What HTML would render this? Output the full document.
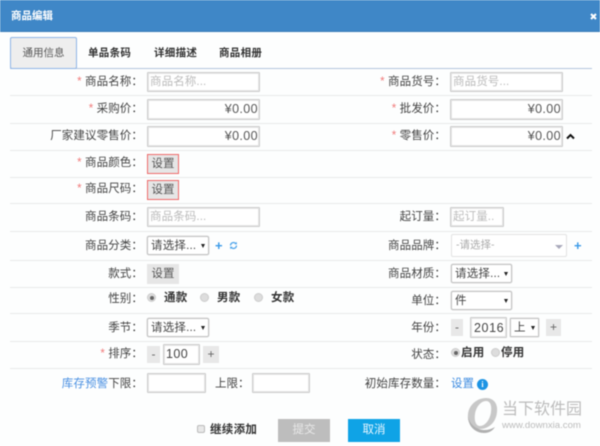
<!DOCTYPE html>
<html><head><meta charset="utf-8">
<style>
html,body{margin:0;padding:0;background:#fdfefe}
#p{position:relative;width:600px;height:446px;overflow:hidden;background:#fdfefe;font-family:"Liberation Sans","Noto Sans CJK SC",sans-serif;font-size:11.5px;color:#444;filter:blur(.4px)}
#p div,#p span.a{position:absolute;box-sizing:border-box;white-space:nowrap}
.l{line-height:16px;text-align:right;right:457px;letter-spacing:.1px}
.l.r{right:154px}
.s{color:#f07a7a}
.h{left:10px;width:582px;height:1px;background:#e8eaea}
.i{border:1px solid #ccc;box-shadow:inset 0 0 0 1px #e6e6e6;background:#fff;border-radius:1px;line-height:18px;color:#bbb;padding-left:2px;letter-spacing:.1px}
.m{text-align:right;color:#555;font-size:12.5px;padding:0 1px 0 0;letter-spacing:.4px}
.b{background:#e6e6e6;text-align:center;color:#555;line-height:20px;font-size:11.5px}
.e{border:1px solid #ee6a6a;line-height:18px}
.sel{border:1px solid #c4c4c4;box-shadow:0 0 0 .5px #ddd;background:#fff;border-radius:2px;color:#444;line-height:18px;padding-left:3px;letter-spacing:.2px}
.sel:after{content:"";position:absolute;right:3px;top:7px;border:2px solid transparent;border-top:4px solid #222;border-bottom:0}
.rd{width:9px;height:9px;border-radius:50%;background:#ddd;border:1px solid #ccc}
.rd.on:after{content:"";position:absolute;left:1.5px;top:1.5px;width:4px;height:4px;border-radius:50%;background:#666}
.t{font-weight:bold;color:#333;line-height:16px;letter-spacing:.3px}
.st{background:#e8e8e8;text-align:center;color:#666;font-size:12px;line-height:17px}
.pl{color:#3c9be8;font-weight:bold;font-size:13px;line-height:14px}
</style></head><body>
<div id="p">
<div style="left:0;top:0;width:600px;height:32px;background:#3f87c7;border-bottom:1px solid #3a7db8"></div>
<div style="left:11px;top:8px;color:#fff;font-weight:bold;font-size:10.5px;line-height:16px">商品编辑</div>
<svg style="position:absolute;left:590px;top:13px" width="7" height="7"><path d="M1 1 L6 6 M6 1 L1 6" stroke="#fff" stroke-width="2"/></svg>

<div style="left:10px;top:68px;width:582px;height:1px;background:#b4c6de"></div>
<div style="left:10px;top:37px;width:67px;height:32px;background:#eee;border:1px solid #8fb5e6;border-radius:2px;text-align:center;line-height:31px;font-size:10.5px;color:#555">通用信息</div>
<div class="t" style="left:88px;top:45px;font-size:10.5px">单品条码</div>
<div class="t" style="left:154px;top:45px;font-size:10.5px">详细描述</div>
<div class="t" style="left:219px;top:45px;font-size:10.5px">商品相册</div>

<div class="h" style="top:95px"></div><div class="h" style="top:123px"></div><div class="h" style="top:150px"></div><div class="h" style="top:177px"></div><div class="h" style="top:203px"></div><div class="h" style="top:231px"></div><div class="h" style="top:260px"></div><div class="h" style="top:287px"></div><div class="h" style="top:313px"></div><div class="h" style="top:341px"></div><div class="h" style="top:368px"></div>

<div class="l" style="top:74px"><span class="s">* </span>商品名称：</div>
<div class="l r" style="top:74px"><span class="s">* </span>商品货号：</div>
<div class="i" style="left:147px;top:72px;width:113px;height:20px">商品名称...</div>
<div class="i" style="left:450px;top:72px;width:113px;height:20px">商品货号...</div>

<div class="l" style="top:101px"><span class="s">* </span>采购价：</div>
<div class="l r" style="top:101px"><span class="s">* </span>批发价：</div>
<div class="i m" style="left:147px;top:99px;width:113px;height:21px">¥0.00</div>
<div class="i m" style="left:450px;top:99px;width:113px;height:21px">¥0.00</div>

<div class="l" style="top:128px">厂家建议零售价：</div>
<div class="l r" style="top:128px"><span class="s">* </span>零售价：</div>
<div class="i m" style="left:147px;top:126px;width:113px;height:21px">¥0.00</div>
<div class="i m" style="left:450px;top:126px;width:113px;height:21px">¥0.00</div>
<svg style="position:absolute;left:566px;top:133px" width="9" height="7"><path d="M1 5.5 L4.5 2 L8 5.5" fill="none" stroke="#111" stroke-width="2"/></svg>

<div class="l" style="top:155px"><span class="s">* </span>商品颜色：</div>
<div class="b e" style="left:147px;top:154px;width:32px;height:20px">设置</div>
<div class="l" style="top:181px"><span class="s">* </span>商品尺码：</div>
<div class="b e" style="left:147px;top:180px;width:32px;height:20px">设置</div>

<div class="l" style="top:209px">商品条码：</div>
<div class="l r" style="top:209px">起订量：</div>
<div class="i" style="left:147px;top:207px;width:113px;height:20px">商品条码...</div>
<div class="i" style="left:450px;top:207px;width:54px;height:20px">起订量..</div>

<div class="l" style="top:238px">商品分类：</div>
<div class="sel" style="left:147px;top:236px;width:62px;height:19px">请选择...</div>
<div class="pl" style="left:215px;top:239px">+</div>
<svg style="position:absolute;left:229px;top:241px" width="9" height="9" viewBox="0 0 9 9"><path d="M1.5 4.5a3 3 0 0 1 5-2.2M7.5 4.5a3 3 0 0 1-5 2.2" fill="none" stroke="#4aa3ea" stroke-width="1.2"/><path d="M5.5 3.2 8 3.4 7.6 .8zM3.5 5.8 1 5.6 1.4 8.2z" fill="#4aa3ea"/></svg>
<div class="l r" style="top:238px">商品品牌：</div>
<div style="left:451px;top:234px;width:116px;height:23px;border:1px solid #e2e2e2;border-radius:2px;background:#fff;color:#aaa;line-height:21px;padding-left:4px;font-size:10.5px">-请选择-</div>
<div style="left:555px;top:245px;width:0;height:0;border:4px solid transparent;border-top:4px solid #aab;border-bottom:0"></div>
<div class="pl" style="left:574px;top:239px">+</div>

<div class="l" style="top:266px">款式：</div>
<div class="b" style="left:147px;top:264px;width:32px;height:20px">设置</div>
<div class="l r" style="top:266px">商品材质：</div>
<div class="sel" style="left:451px;top:264px;width:61px;height:19px">请选择...</div>

<div class="l" style="top:291px">性别：</div>
<div class="rd on" style="left:147px;top:293px"></div>
<div class="t" style="left:164px;top:290px">通款</div>
<div class="rd" style="left:200px;top:293px"></div>
<div class="t" style="left:217px;top:290px">男款</div>
<div class="rd" style="left:254px;top:293px"></div>
<div class="t" style="left:271px;top:290px">女款</div>
<div class="l r" style="top:293px">单位：</div>
<div class="sel" style="left:451px;top:291px;width:61px;height:19px">件</div>

<div class="l" style="top:320px">季节：</div>
<div class="sel" style="left:147px;top:318px;width:62px;height:19px">请选择...</div>
<div class="l r" style="top:320px">年份：</div>
<div class="st" style="left:451px;top:319px;width:12px;height:17px">-</div>
<div class="i" style="left:470px;top:317px;width:37px;height:21px;color:#444;font-size:12.5px;letter-spacing:.6px;padding-left:3px;line-height:20px">2016</div>
<div class="sel" style="left:510px;top:318px;width:29px;height:19px;border-radius:1px">上</div>
<div class="st" style="left:546px;top:319px;width:15px;height:17px">+</div>

<div class="l" style="top:346px"><span class="s">* </span>排序：</div>
<div class="st" style="left:147px;top:346px;width:13px;height:17px">-</div>
<div class="i" style="left:163px;top:344px;width:37px;height:21px;color:#444;font-size:12.5px;letter-spacing:.4px;padding-left:2px;line-height:19px">100</div>
<div class="st" style="left:203px;top:346px;width:16px;height:17px">+</div>
<div class="l r" style="top:347px">状态：</div>
<div class="rd on" style="left:451px;top:348px"></div>
<div class="t" style="left:461px;top:345px">启用</div>
<div class="rd" style="left:491px;top:348px"></div>
<div class="t" style="left:501px;top:345px">停用</div>

<div class="l" style="top:376px"><span style="color:#4a90e2">库存预警</span>下限：</div>
<div class="i" style="left:147px;top:373px;width:59px;height:20px"></div>
<div style="left:215px;top:376px;line-height:16px">上限：</div>
<div class="i" style="left:252px;top:373px;width:58px;height:20px"></div>
<div class="l r" style="top:376px">初始库存数量：</div>
<div style="left:451px;top:376px;color:#3d8be0;line-height:16px">设置</div>
<div style="left:477px;top:379px;width:11px;height:11px;border-radius:50%;background:#1c94e4;color:#fff;font:bold 8px/11px 'Liberation Serif',serif;text-align:center">i</div>

<div style="left:197px;top:425px;width:8px;height:8px;border:1px solid #bbb;border-radius:2px;background:#e8e8e8"></div>
<div class="t" style="left:210px;top:422px">继续添加</div>
<div style="left:278px;top:419px;width:52px;height:23px;background:#bdbdbd;color:#e8e8e8;text-align:center;line-height:23px">提交</div>
<div style="left:348px;top:419px;width:52px;height:23px;background:#0fa3e6;color:#e8f6ff;text-align:center;line-height:23px">取消</div>

<svg style="position:absolute;left:466px;top:397px" width="33" height="37" viewBox="0 0 33 37"><path fill-rule="evenodd" d="M20 1C28 1 32 7 31 15 30 26 22 32 14 32 6 32 1 26 2 17 3 8 11 1 20 1ZM20 4C15 4 10 10 9 17 8 24 10 29 14 29 19 29 24 23 25 15 26 8 24 4 20 4Z" fill="#c8c8c8"/><path d="M2 19C2 30 10 36 18 36 24 36 27 33 29 30 24 33 18 34 13 32 7 30 3 25 2 19Z" fill="#b0b0b0"/></svg>
<div style="left:502px;top:400px;color:#bcbcbc;font-size:16px;line-height:20px">当下软件园</div>
<div style="left:502px;top:419px;color:#bbb;font-size:9.6px;line-height:14px">www.downxia.com</div>
</div>
</body></html>
